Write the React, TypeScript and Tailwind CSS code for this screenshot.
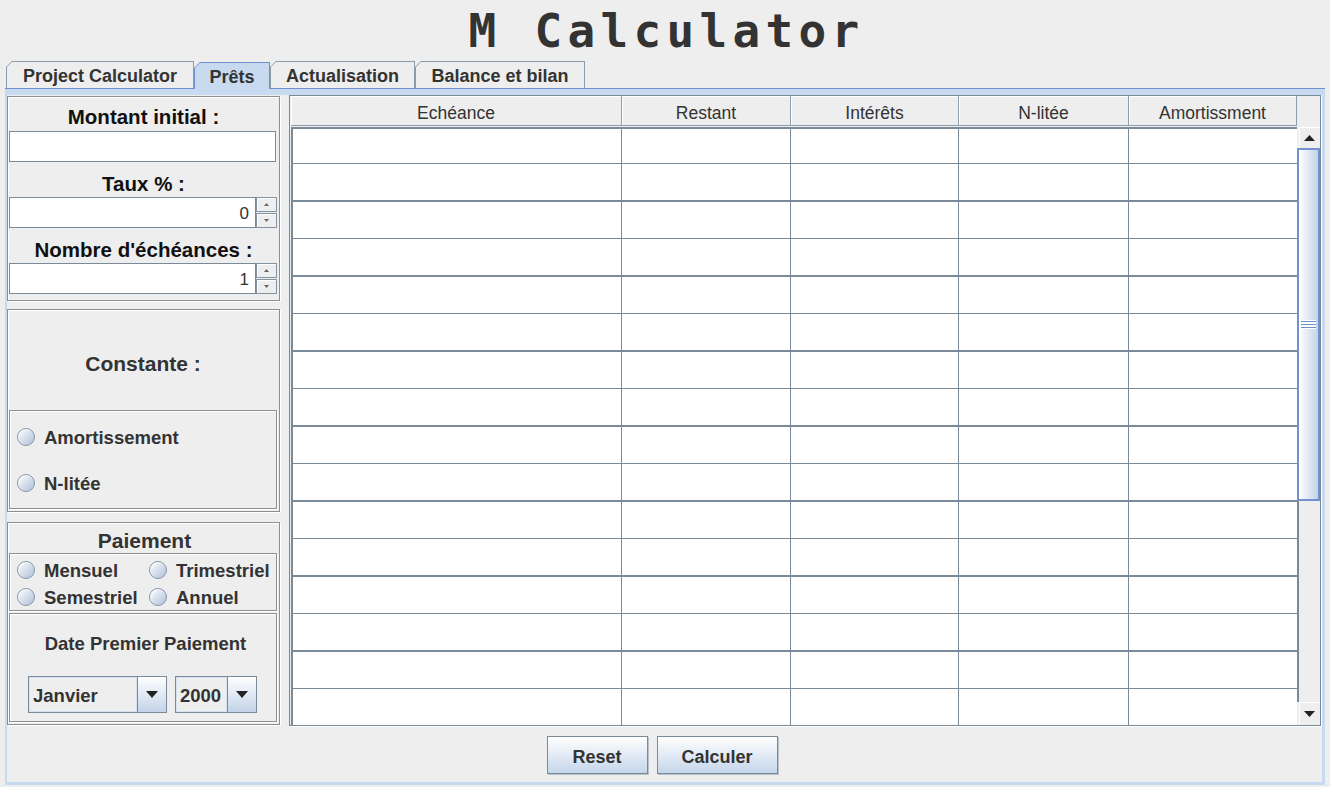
import React from 'react'

const etched = 'border border-[#8c8f94] shadow-[inset_1px_1px_0_#ffffff,1px_1px_0_#ffffff]'

const tabs = [
  { label: 'Project Calculator', w: 'w-[188px]' },
  { label: 'Prêts', w: 'w-[76px]', active: true },
  { label: 'Actualisation', w: 'w-[145px]' },
  { label: 'Balance et bilan', w: 'w-[170px]' },
]

const columns = [
  { label: 'Echéance', head: 'w-[331px]', body: 'w-[329px] border-r' },
  { label: 'Restant', head: 'w-[169px]', body: 'w-[169px] border-r' },
  { label: 'Intérêts', head: 'w-[168px]', body: 'w-[168px] border-r' },
  { label: 'N-litée', head: 'w-[170px]', body: 'w-[170px] border-r' },
  { label: 'Amortissment', head: 'w-[168px]', body: 'w-[168px]' },
]

// first row is short, then thick / thin lines alternate
const rows = [
  'h-[35px] border-b',
  ...Array.from({ length: 8 }).flatMap(() => ['h-[38px] border-b-2', 'h-[37px] border-b']),
]

function Tab({ label, w, active }: { label: string; w: string; active?: boolean }) {
  return (
    <div
      className={`relative h-[27px] ${w} ${active ? 'bg-[#6f8fcf] z-10 -mb-px' : 'bg-[#8d9aa7]'} [clip-path:polygon(6px_0,100%_0,100%_100%,0_100%,0_6px)]`}
    >
      <div
        className={`absolute left-px right-px top-px bottom-0 flex items-center justify-center pt-[2px] text-[18px] font-bold text-[#333] ${active ? 'bg-[#c8daf0]' : 'bg-[#eeeeee]'} [clip-path:polygon(5px_0,100%_0,100%_100%,0_100%,0_5px)]`}
      >
        {label}
      </div>
    </div>
  )
}

function Spinner({ value }: { value: string }) {
  return (
    <div className="flex h-[31px] mr-px">
      <div className="flex-1 bg-white border border-[#7a8a99] flex items-center justify-end pr-[6px] pt-[2px] text-[17px] text-[#333]">
        {value}
      </div>
      <div className="w-[21px] flex flex-col gap-px">
        <div className="h-[15px] bg-[#eeeeee] border border-[#8593a0] shadow-[inset_1px_1px_0_#fff] flex items-center justify-center">
          <svg width="5" height="3" viewBox="0 0 5 3"><path d="M2.5 0L5 3H0z" fill="#666" /></svg>
        </div>
        <div className="h-[15px] bg-[#eeeeee] border border-[#8593a0] shadow-[inset_1px_1px_0_#fff] flex items-center justify-center">
          <svg width="5" height="3" viewBox="0 0 5 3"><path d="M0 0h5L2.5 3z" fill="#666" /></svg>
        </div>
      </div>
    </div>
  )
}

function Radio({ label }: { label: string }) {
  return (
    <div className="flex items-center h-full">
      <span className="w-[18px] h-[18px] rounded-full border border-[#8596aa] bg-linear-to-br from-white to-[#afc0d8] shadow-[inset_1px_1px_1px_#fff]" />
      <span className="ml-[9px] pt-[2px] text-[18.5px] font-bold text-[#333]">{label}</span>
    </div>
  )
}

function Combo({ value, w }: { value: string; w: string }) {
  return (
    <div className={`flex h-[37px] ${w} border border-[#7a8a99]`}>
      <div className="flex-1 flex items-center pl-[4px] pt-[2px] bg-[#eeeeee] shadow-[inset_0_0_0_1px_#d6e2f2] text-[18.5px] font-bold text-[#333]">
        {value}
      </div>
      <div className="w-[29px] border-l border-[#7a8a99] bg-linear-to-b from-white to-[#c3d3e8] flex items-center justify-center">
        <svg width="12" height="7" viewBox="0 0 12 7"><path d="M0 0h12L6 7z" fill="#222" /></svg>
      </div>
    </div>
  )
}

function ArrowButton({ dir, h }: { dir: 'up' | 'down'; h: string }) {
  return (
    <div className={`${h} ml-[2px] bg-[#eeeeee] shadow-[inset_1px_1px_0_#fff] flex items-center justify-center`}>
      <svg width="11" height="6" viewBox="0 0 11 6">
        <path d={dir === 'up' ? 'M5.5 0L11 6H0z' : 'M0 0h11L5.5 6z'} fill="#222" />
      </svg>
    </div>
  )
}

export default function App() {
  return (
    <div className="w-[1330px] h-[787px] bg-[#eeeeee] flex flex-col font-['Liberation_Sans',Arial,sans-serif] overflow-hidden">
      {/* Title */}
      <div className="h-[61px] flex items-center justify-center pl-[3px] pt-px">
        <h1 className="font-['DejaVu_Sans_Mono',monospace] font-bold text-[46px] tracking-[5.3px] leading-none text-[#333]">
          M Calculator
        </h1>
      </div>

      {/* Tabs */}
      <div className="h-[27px] flex items-end pl-[6px]">
        {tabs.map((t) => (
          <Tab key={t.label} {...t} />
        ))}
      </div>

      {/* Tab content */}
      <div className="ml-[5px] w-[1320px] h-[697px] border-t border-[#6f8fcf] bg-[#c8daf0] pt-[6px] pl-[2px] pr-[3px] pb-[3px]">
        <div className="h-full bg-[#eeeeee] flex flex-col">
          <div className="h-[632px] flex gap-[9px]">
            {/* Left form */}
            <div className="w-[273px] flex flex-col pt-px">
              <div className={`h-[205px] ${etched} flex flex-col px-px`}>
                <div className="h-[34px] pt-[6px] leading-[28px] text-center text-[20.5px] font-bold text-[#111]">Montant initial :</div>
                <div className="h-[31px] mr-[2px] bg-white border border-[#7a8a99]" />
                <div className="h-[35px] pt-[9px] leading-[26px] text-center text-[20.5px] font-bold text-[#111]">Taux % :</div>
                <Spinner value="0" />
                <div className="h-[35px] pt-[9px] leading-[26px] text-center text-[20.5px] font-bold text-[#111]">Nombre d'échéances :</div>
                <Spinner value="1" />
              </div>

              <div className={`mt-[8px] h-[203px] ${etched} flex flex-col pl-px pr-[2px]`}>
                <div className="h-[100px] pt-[7px] flex items-center justify-center text-[21px] font-bold text-[#333]">Constante :</div>
                <div className={`flex-1 mb-[2px] ${etched} flex flex-col pt-[11px] gap-[16px] pl-[7px]`}>
                  <div className="h-[30px]"><Radio label="Amortissement" /></div>
                  <div className="h-[30px]"><Radio label="N-litée" /></div>
                </div>
              </div>

              <div className={`mt-[10px] h-[203px] ${etched} flex flex-col pl-px pr-[2px]`}>
                <div className="h-[30px] pt-[6px] pl-[3px] leading-[24px] text-center text-[21px] font-bold text-[#333]">Paiement</div>
                <div className={`h-[58px] ${etched} grid grid-cols-[132px_1fr] grid-rows-[27px_27px] pt-[2px] pl-[7px]`}>
                  <Radio label="Mensuel" />
                  <Radio label="Trimestriel" />
                  <Radio label="Semestriel" />
                  <Radio label="Annuel" />
                </div>
                <div className={`flex-1 mt-[2px] mb-[2px] ${etched} flex flex-col`}>
                  <div className="mt-[16px] h-[29px] pl-[5px] leading-[27px] text-center text-[18.5px] font-bold text-[#333]">Date Premier Paiement</div>
                  <div className="mt-[17px] flex gap-[8px] pl-[18px]">
                    <Combo value="Janvier" w="w-[139px]" />
                    <Combo value="2000" w="w-[82px]" />
                  </div>
                </div>
              </div>
            </div>

            {/* Table */}
            <div className="w-[1032px] h-[631px] border border-[#7a8a99] shadow-[1px_1px_0_#fff] bg-[#eeeeee] pl-px flex flex-col">
              <div className="h-[31px] flex">
                {columns.map((c) => (
                  <div
                    key={c.label}
                    className={`${c.head} h-[30px] border-r border-b border-[#8d9cab] shadow-[inset_1px_1px_0_#fff] flex items-center justify-center pt-[6px] text-[17.5px] text-[#333]`}
                  >
                    {c.label}
                  </div>
                ))}
              </div>
              <div className="h-[598px] flex">
                <div className="w-[1006px] border-t-2 border-l-2 border-[#7a8a99] bg-white overflow-hidden">
                  {rows.map((r, i) => (
                    <div key={i} className={`${r} border-[#7a8a99] flex`}>
                      {columns.map((c) => (
                        <div key={c.label} className={`${c.body} h-full border-[#7a8a99]`} />
                      ))}
                    </div>
                  ))}
                </div>
                <div className="w-[23px] flex flex-col">
                  <ArrowButton dir="up" h="h-[21px]" />
                  <div className="relative h-[353px] border-2 border-[#7191d0] bg-linear-to-r from-white to-[#c2d3ea] flex items-center justify-center">
                    <div className="w-[15px] flex flex-col gap-[2px] bg-white py-px">
                      <div className="h-px bg-[#6f8fcf]" />
                      <div className="h-px bg-[#6f8fcf]" />
                      <div className="h-px bg-[#6f8fcf]" />
                    </div>
                  </div>
                  <div className="flex-1 border-l-2 border-[#7a8a99] bg-[#eeeeee]" />
                  <ArrowButton dir="down" h="h-[23px]" />
                </div>
              </div>
            </div>
          </div>

          {/* Buttons */}
          <div className="flex-1 flex justify-center gap-[9px] pt-[9px] pr-[5px]">
            <button className="w-[101px] h-[38px] pt-[4px] border border-[#7a8a99] bg-linear-to-b from-white to-[#c5d6ea] shadow-[1px_1px_0_#b9c2cc] text-[18px] font-bold text-[#333]">
              Reset
            </button>
            <button className="w-[121px] h-[38px] pt-[4px] border border-[#7a8a99] bg-linear-to-b from-white to-[#c5d6ea] shadow-[1px_1px_0_#b9c2cc] text-[18px] font-bold text-[#333]">
              Calculer
            </button>
          </div>
        </div>
      </div>
    </div>
  )
}
